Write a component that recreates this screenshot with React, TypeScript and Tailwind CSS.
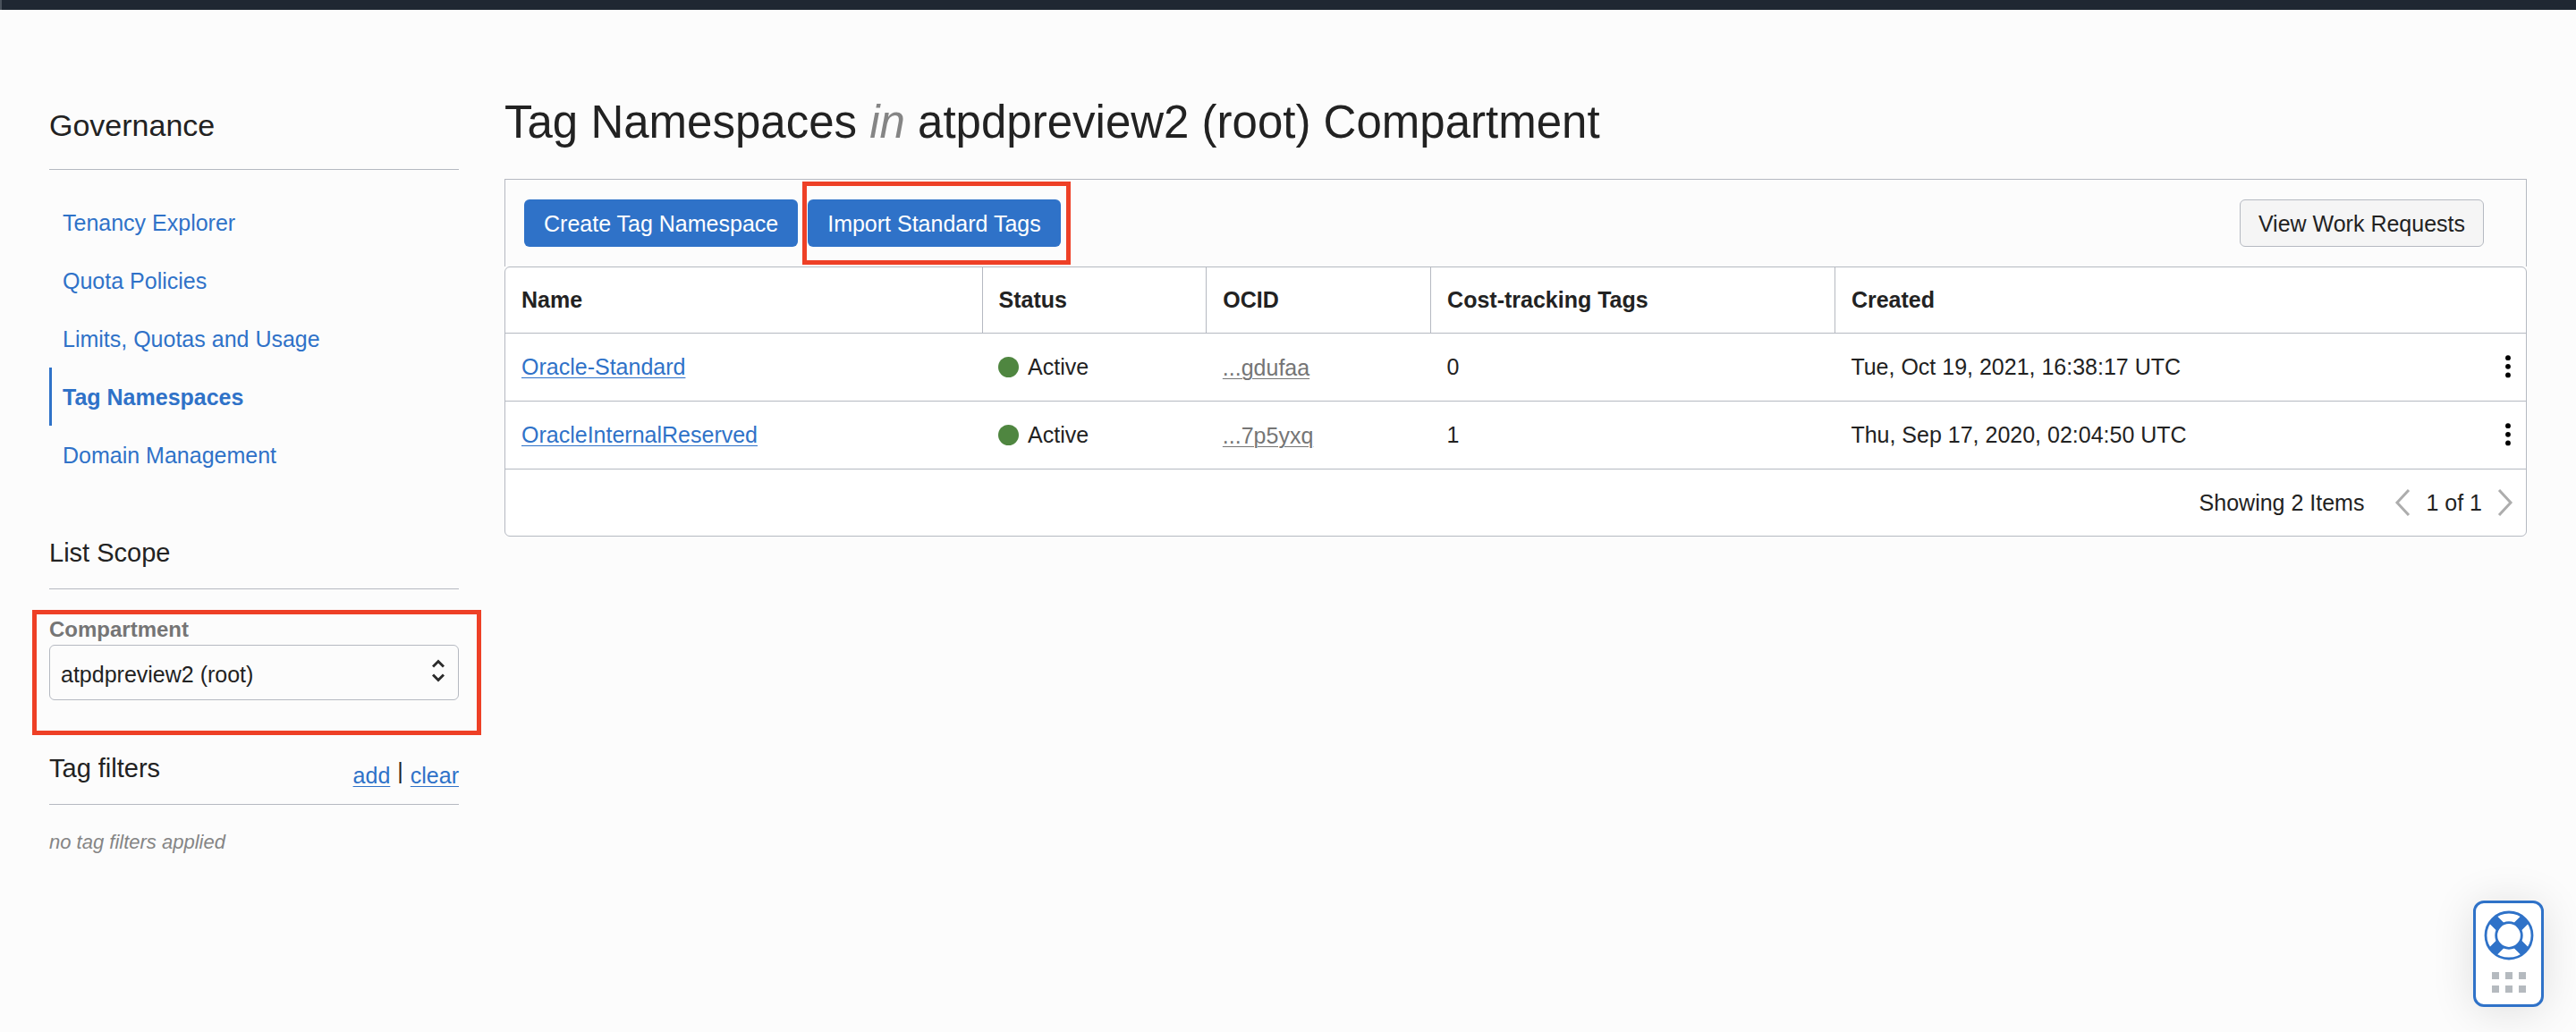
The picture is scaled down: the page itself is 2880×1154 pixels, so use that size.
import { useState } from "react";

const navItems = [
  "Tenancy Explorer",
  "Quota Policies",
  "Limits, Quotas and Usage",
  "Tag Namespaces",
  "Domain Management",
];

const columns = ["Name", "Status", "OCID", "Cost-tracking Tags", "Created"];

const namespaces = [
  {
    name: "Oracle-Standard",
    status: "Active",
    ocid: "...gdufaa",
    costTags: 0,
    created: "Tue, Oct 19, 2021, 16:38:17 UTC",
  },
  {
    name: "OracleInternalReserved",
    status: "Active",
    ocid: "...7p5yxq",
    costTags: 1,
    created: "Thu, Sep 17, 2020, 02:04:50 UTC",
  },
];

const link = "text-[#2f72c8] underline decoration-1 underline-offset-3";

function Sidebar() {
  const [active, setActive] = useState("Tag Namespaces");
  return (
    <aside className="w-[458px] shrink-0 pt-[109px]">
      <h2 className="border-b border-[#b5b9c1] pb-[29px] text-[34px] leading-10">Governance</h2>
      <nav aria-label="Governance" className="mt-[26px]">
        <ul>
          {navItems.map((item) => (
            <li key={item}>
              <a
                href="#"
                onClick={() => setActive(item)}
                aria-current={item === active ? "page" : undefined}
                className={
                  item === active
                    ? "flex h-[65px] items-center border-l-3 border-[#2f72c8] pl-3 font-bold text-[#2f72c8]"
                    : "flex h-[65px] items-center border-l-3 border-transparent pl-3 text-[#2f72c8]"
                }
              >
                {item}
              </a>
            </li>
          ))}
        </ul>
      </nav>

      <h3 className="mt-[60px] border-b border-[#b5b9c1] pb-[23px] text-[29px] leading-[34px]">List Scope</h3>
      <div className="relative mt-[31px]">
        <label htmlFor="compartment" className="block text-[24px] leading-7 font-bold text-[#757575]">
          Compartment
        </label>
        <div className="relative mt-[3px]">
          <select
            id="compartment"
            className="block h-[62px] w-full appearance-none rounded-md border border-[#b5b9c1] bg-[#fcfcfc] pt-1 pr-12 pl-3"
          >
            <option>atpdpreview2 (root)</option>
          </select>
          <svg
            className="pointer-events-none absolute top-4 right-4"
            width="14"
            height="26"
            viewBox="0 0 14 26"
            fill="none"
            stroke="#2b2b2b"
            strokeWidth="3"
            aria-hidden="true"
          >
            <path d="M1 8.5 7 2.5l6 6M1 17.5l6 6 6-6" />
          </svg>
        </div>
        <div className="pointer-events-none absolute -top-2 -right-[25px] -bottom-[39px] -left-[19px] border-5 border-[#ee4026]" />
      </div>

      <div className="mt-[59px] flex items-start justify-between border-b border-[#b5b9c1] pb-[17px]">
        <h3 className="text-[29px] leading-[34px]">Tag filters</h3>
        <div className="flex items-start gap-2 pt-[10px]">
          <a href="#" className={link}>add</a>
          <span className="leading-5">|</span>
          <a href="#" className={link}>clear</a>
        </div>
      </div>
      <p className="mt-[29px] text-[22px] leading-[26px] text-[#858585] italic">no tag filters applied</p>
    </aside>
  );
}

function Chevron({ d }: { d: string }) {
  return (
    <svg width="18" height="30" viewBox="0 0 18 30" fill="none" stroke="#adadad" strokeWidth="3" aria-hidden="true">
      <path d={d} />
    </svg>
  );
}

function NamespaceTable() {
  return (
    <div className="rounded-md border border-[#b5b9c1] bg-white">
      <table className="w-full table-fixed border-collapse text-left">
        <colgroup>
          <col className="w-[23.6%]" />
          <col className="w-[11.1%]" />
          <col className="w-[11.1%]" />
          <col className="w-[20%]" />
          <col />
          <col className="w-[60px]" />
        </colgroup>
        <thead>
          <tr className="h-[73px] border-b border-[#b5b9c1]">
            {columns.map((c) => (
              <th key={c} scope="col" className="border-r border-[#b5b9c1] px-[18px] nth-5:border-r-0">
                {c}
              </th>
            ))}
            <td />
          </tr>
        </thead>
        <tbody>
          {namespaces.map((ns) => (
            <tr key={ns.name} className="h-[76px] border-b border-[#b5b9c1]">
              <td className="px-[18px]">
                <a href="#" className={link}>{ns.name}</a>
              </td>
              <td className="px-[18px]">
                <span className="flex items-center gap-[10px]">
                  <span className="size-[23px] rounded-full bg-[#4f8640]" />
                  {ns.status}
                </span>
              </td>
              <td className="px-[18px]">
                <span className="block pt-[2px] text-[#757575] underline decoration-1 underline-offset-3">{ns.ocid}</span>
              </td>
              <td className="px-[18px]">{ns.costTags}</td>
              <td className="px-[18px]">{ns.created}</td>
              <td className="pr-[14px]">
                <button type="button" aria-label={"Actions for " + ns.name} className="ml-auto block">
                  <svg width="12" height="26" viewBox="0 0 12 26" fill="#000" aria-hidden="true">
                    <circle cx="6" cy="3.2" r="2.9" />
                    <circle cx="6" cy="12.8" r="2.9" />
                    <circle cx="6" cy="22.4" r="2.9" />
                  </svg>
                </button>
              </td>
            </tr>
          ))}
        </tbody>
      </table>
      <div className="flex h-[74px] items-center justify-end pr-[14px]">
        <span>Showing 2 Items</span>
        <button type="button" aria-label="Previous page" className="ml-[34px]">
          <Chevron d="M16 1 3 15l13 14" />
        </button>
        <span className="mx-[17px]">1 of 1</span>
        <button type="button" aria-label="Next page">
          <Chevron d="M2 1l13 14L2 29" />
        </button>
      </div>
    </div>
  );
}

function HelpWidget() {
  return (
    <button
      type="button"
      aria-label="Help"
      className="fixed right-9 bottom-7 flex w-[79px] flex-col items-center rounded-xl border-3 border-[#2f72c8] bg-white pt-2 pb-[13px] shadow-[0_4px_48px_rgba(0,0,0,0.12)]"
    >
      <svg width="56" height="56" viewBox="0 0 56 56" fill="none" stroke="#2f72c8" aria-hidden="true">
        <path d="M9.500 9.500l10 10M46.500 9.500l-10 10M9.500 46.500l10-10M46.500 46.500l-10-10" strokeWidth="12" />
        <circle cx="28" cy="28" r="26" strokeWidth="2.8" />
        <circle cx="28" cy="28" r="14.3" strokeWidth="2.8" fill="#fff" />
      </svg>
      <span className="mt-[13px] grid grid-cols-3 gap-[7px]">
        {[0, 1, 2, 3, 4, 5].map((n) => (
          <span key={n} className="size-2 bg-[#b5babf]" />
        ))}
      </span>
    </button>
  );
}

export default function App() {
  return (
    <div className="min-h-screen bg-[#fcfcfc] font-['Liberation_Sans',Arial,sans-serif] text-[25px] leading-[30px] text-[#222]">
      <header className="h-[11px] border-l-2 border-[#4a525c] bg-[#1f2732]" />
      <div className="flex gap-[51px] px-[55px]">
        <Sidebar />
        <main className="min-w-0 flex-1 pt-24">
          <h1 className="text-[51px] leading-[60px]">
            Tag Namespaces <em className="text-[#858585]">in</em> atpdpreview2 (root) Compartment
          </h1>
          <div className="mt-[33px] flex h-[98px] items-center border border-b-0 border-[#b5b9c1] pr-[47px] pl-[21px]">
            <button type="button" className="h-[53px] rounded-md bg-[#2f72c8] px-[22px] text-white">
              Create Tag Namespace
            </button>
            <div className="relative ml-[11px]">
              <button type="button" className="h-[53px] rounded-md bg-[#2f72c8] px-[22px] text-white">
                Import Standard Tags
              </button>
              <div className="pointer-events-none absolute -top-5 -right-[11px] -bottom-5 -left-[6px] border-5 border-[#ee4026]" />
            </div>
            <button
              type="button"
              className="ml-auto h-[53px] rounded-md border border-[#b5b9c1] bg-[#f5f5f5] px-5"
            >
              View Work Requests
            </button>
          </div>
          <NamespaceTable />
        </main>
      </div>
      <HelpWidget />
    </div>
  );
}
